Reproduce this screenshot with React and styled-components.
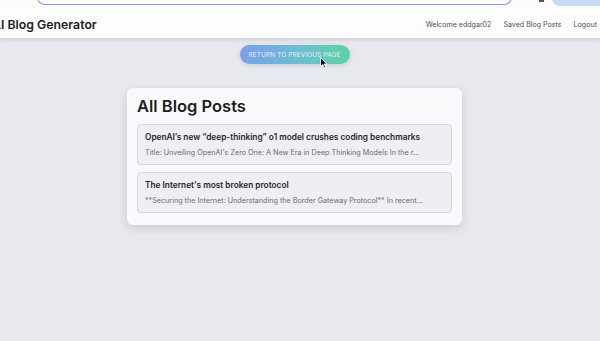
import React from "react";
import styled, { createGlobalStyle } from "styled-components";

const GlobalStyle = createGlobalStyle`
  html, body {
    margin: 0;
    padding: 0;
    background: #e8e9ee;
    font-family: Inter, "Liberation Sans", sans-serif;
    overflow: hidden;
  }
`;

const Page = styled.div`
  width: 600px;
  height: 341px;
  display: flex;
  flex-direction: column;
  position: relative;
  overflow: hidden;
  background: #e8e9ee;
`;

const BrowserStrip = styled.div`
  height: 8px;
  background: #fdfdfe;
  display: flex;
  align-items: flex-end;
  overflow: hidden;
  padding-left: 37px;
  padding-bottom: 3px;
  box-sizing: border-box;
`;

const AddressField = styled.div`
  width: 475px;
  height: 20px;
  flex: none;
  border: 1.5px solid #7d9be0;
  border-top: none;
  border-radius: 0 0 8px 8px;
  box-sizing: border-box;
`;

const Caret = styled.div`
  width: 5px;
  height: 2px;
  flex: none;
  background: #555;
  margin: 0 0 3px 27px;
  align-self: flex-end;
`;

const Pill = styled.div`
  flex: 1;
  height: 20px;
  margin-left: 8px;
  margin-bottom: -1px;
  background: #c9d8f5;
  border-radius: 0 0 0 8px;
`;

const Navbar = styled.header`
  height: 30px;
  background: #fdfdfd;
  display: flex;
  align-items: center;
  justify-content: space-between;
  box-shadow: 0 2px 4px rgba(15, 15, 30, 0.12);
  padding-right: 3px;
  z-index: 1;
`;

const Brand = styled.div`
  font-size: 12.3px;
  font-weight: 600;
  color: #1f2023;
  margin-left: -8px;
  padding-top: 2px;
`;

const Links = styled.nav`
  display: flex;
  gap: 12px;
  padding-top: 2px;
`;

const NavLink = styled.span`
  font-size: 7.1px;
  color: #4b4f58;
`;

const Main = styled.main`
  display: flex;
  flex-direction: column;
  align-items: center;
  padding: 7px 11px 0 0;
`;

const BackButton = styled.button`
  height: 19px;
  width: 110px;
  border: none;
  border-radius: 10px;
  background: linear-gradient(90deg, #7c9ee9 0%, #6cbfd0 55%, #5dd3a2 100%);
  color: #e3ebf7;
  font-family: Inter, "Liberation Sans", sans-serif;
  font-size: 6.5px;
  letter-spacing: 0.1px;
  text-transform: uppercase;
  box-shadow: 0 1px 4px rgba(80, 110, 170, 0.25);
  padding: 0;
`;

const Card = styled.section`
  margin-top: 24px;
  width: 335px;
  background: #f9f9fb;
  border-radius: 6px;
  box-shadow: 0 3px 10px rgba(20, 25, 40, 0.14);
  padding: 9px 10px 12px 10px;
  box-sizing: border-box;
  display: flex;
  flex-direction: column;
  gap: 7px;
`;

const CardTitle = styled.h2`
  margin: 0 0 2px 0;
  font-size: 16.5px;
  font-weight: 600;
  color: #1d1e22;
  line-height: 18px;
`;

const Post = styled.article`
  background: #eeeef3;
  border: 1px solid #d9dae0;
  border-radius: 4px;
  padding: 6px 7px;
  display: flex;
  flex-direction: column;
  gap: 4px;
`;

const PostTitle = styled.div`
  font-size: 8.3px;
  font-weight: 600;
  color: #26272b;
  line-height: 13px;
`;

const PostExcerpt = styled.div`
  font-size: 7.2px;
  color: #6a6d75;
  line-height: 10px;
  white-space: nowrap;
`;

const Cursor = styled.svg`
  position: absolute;
  left: 320px;
  top: 57px;
`;

const posts = [
  {
    title: "OpenAI\u2019s new \u201cdeep-thinking\u201d o1 model crushes coding benchmarks",
    excerpt:
      "Title: Unveiling OpenAI's Zero One: A New Era in Deep Thinking Models In the r...",
  },
  {
    title: "The Internet's most broken protocol",
    excerpt:
      "**Securing the Internet: Understanding the Border Gateway Protocol** In recent...",
  },
];

export default function App() {
  return (
    <>
      <GlobalStyle />
      <Page>
        <BrowserStrip>
          <AddressField />
          <Caret />
          <Pill />
        </BrowserStrip>
        <Navbar>
          <Brand>AI Blog Generator</Brand>
          <Links>
            <NavLink>Welcome eddgar02</NavLink>
            <NavLink>Saved Blog Posts</NavLink>
            <NavLink>Logout</NavLink>
          </Links>
        </Navbar>
        <Main>
          <BackButton>Return to previous page</BackButton>
          <Card>
            <CardTitle>All Blog Posts</CardTitle>
            {posts.map((p) => (
              <Post key={p.title}>
                <PostTitle>{p.title}</PostTitle>
                <PostExcerpt>{p.excerpt}</PostExcerpt>
              </Post>
            ))}
          </Card>
        </Main>
        <Cursor width="8" height="12" viewBox="0 0 8 12">
          <path d="M0.5 0.5 L0.5 9.5 L2.7 7.4 L4.3 11 L5.6 10.4 L4.1 6.9 L7 6.9 Z" fill="#111" stroke="#fff" strokeWidth="0.8" />
        </Cursor>
      </Page>
    </>
  );
}
